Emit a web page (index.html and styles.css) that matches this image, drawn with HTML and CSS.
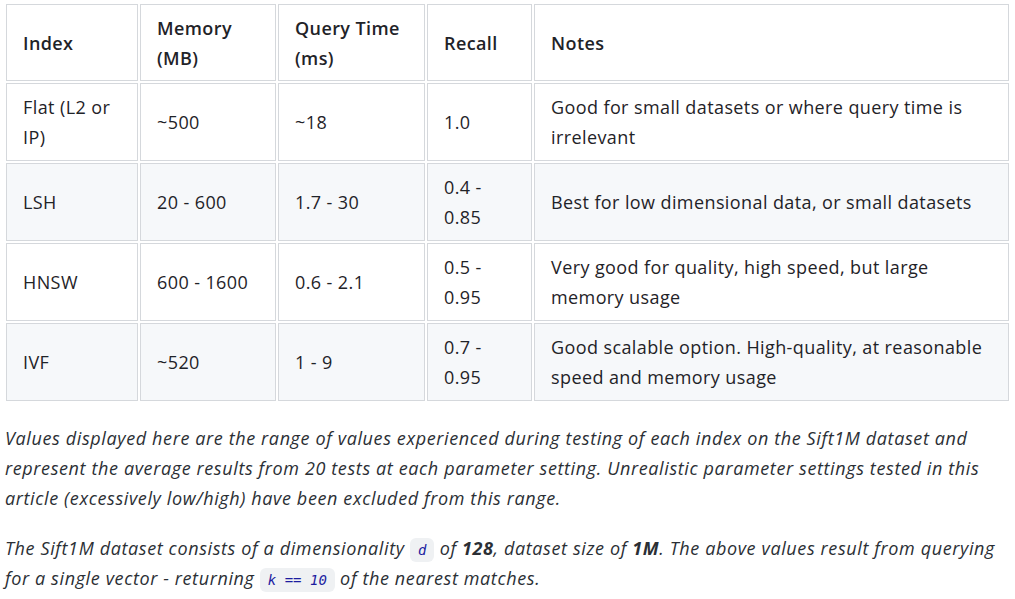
FILE: index.html
```html
<!DOCTYPE html>
<html>
<head>
<meta charset="utf-8">
<link rel="stylesheet" href="styles.css">
</head>
<body>
<div class="page">
  <table class="results">
    <colgroup>
      <col class="c1"><col class="c2"><col class="c3"><col class="c4"><col class="c5">
    </colgroup>
    <thead>
      <tr><th>Index</th><th>Memory (MB)</th><th>Query Time (ms)</th><th>Recall</th><th>Notes</th></tr>
    </thead>
    <tbody>
      <tr><td>Flat (L2 or IP)</td><td>~500</td><td>~18</td><td>1.0</td><td>Good for small datasets or where query time is irrelevant</td></tr>
      <tr class="alt"><td>LSH</td><td>20 - 600</td><td>1.7 - 30</td><td>0.4 - 0.85</td><td>Best for low dimensional data, or small datasets</td></tr>
      <tr><td>HNSW</td><td>600 - 1600</td><td>0.6 - 2.1</td><td>0.5 - 0.95</td><td>Very good for quality, high speed, but large memory usage</td></tr>
      <tr class="alt"><td>IVF</td><td>~520</td><td>1 - 9</td><td>0.7 - 0.95</td><td>Good scalable option. High-quality, at reasonable speed and memory usage</td></tr>
    </tbody>
  </table>
  <p class="note">Values displayed here are the range of values experienced during testing of each index on the Sift1M dataset and represent the average results from 20 tests at each parameter setting. Unrealistic parameter settings tested in this article (excessively low/high) have been excluded from this range.</p>
  <p class="note">The Sift1M dataset consists of a dimensionality <code>d</code> of <b>128</b>, dataset size of <b>1M</b>. The above values result from querying for a single vector - returning <code>k == 10</code> of the nearest matches.</p>
</div>
</body>
</html>
```

FILE: styles.css
```css
html, body {
  margin: 0;
  padding: 0;
  background: #ffffff;
}
.page {
  padding: 2px 4px 0 4px;
  font-family: "Open Sans", "Noto Sans", sans-serif;
  font-size: 18px;
  color: #1f2328;
}
.results {
  border-collapse: separate;
  border-spacing: 2px;
  table-layout: fixed;
  width: 1007px;
  letter-spacing: 0.4px;
}
.c1 { width: 132px; }
.c2 { width: 136px; }
.c3 { width: 147px; }
.c4 { width: 105px; }
.c5 { width: auto; }
.results th,
.results td {
  border: 1px solid #d5d8dc;
  padding: 8px 16px;
  line-height: 30px;
  height: 78px;
  box-sizing: border-box;
  text-align: left;
  vertical-align: middle;
}
.results th {
  font-weight: 600;
  height: 77px;
  padding-top: 8px;
  padding-bottom: 7px;
}
.results tr.alt td {
  background: #f6f8fa;
}
.note {
  font-style: italic;
  line-height: 30px;
  letter-spacing: 0.62px;
  margin: 20px 0 0 1px;
  color: #2b2f35;
}
.note + .note {
  margin-top: 20px;
}
.note b {
  font-weight: 700;
}
code {
  font-family: "DejaVu Sans Mono", "Liberation Mono", monospace;
  font-size: 14px;
  line-height: 1;
  letter-spacing: 0;
  font-style: italic;
  color: #1c1ca0;
  background: #eff1f3;
  border-radius: 6px;
  padding: 4px 8px;
}
```
